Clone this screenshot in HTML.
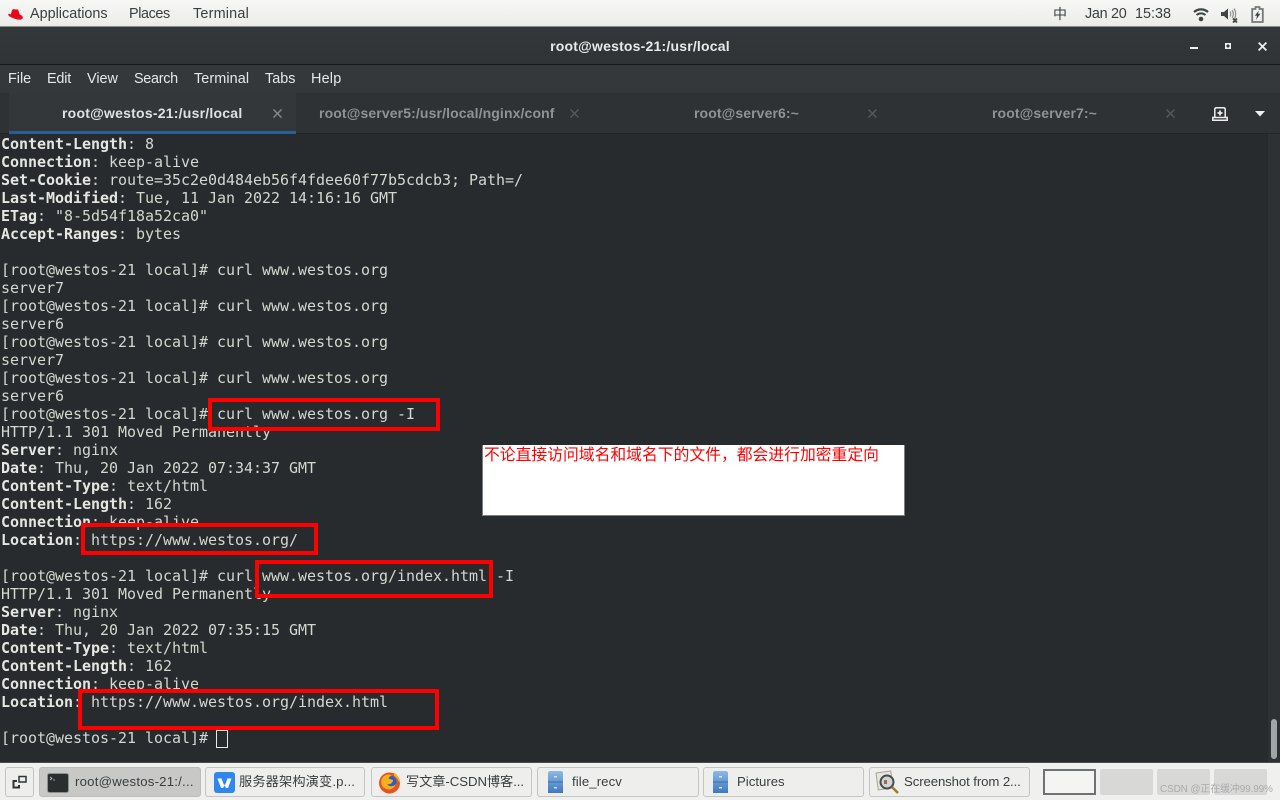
<!DOCTYPE html>
<html><head><meta charset="utf-8"><style>
html,body{margin:0;padding:0;background:#282b2e}
#r{position:relative;width:1280px;height:800px;overflow:hidden;background:#282b2e;font-family:"Liberation Sans","Noto Sans CJK SC",sans-serif}
.a{position:absolute;white-space:nowrap}
.u{font-size:14.4px;line-height:18px}
.m{color:#e6e8e8}
.tab{color:#8f9394;font-size:14px;line-height:18px;font-weight:400}
.l{position:absolute;left:1px;height:18px;font:15px/18px "DejaVu Sans Mono",monospace;color:#d3d7cf;white-space:pre;letter-spacing:-.03px}
.l b{font-weight:700;color:#e4e6e2}
.box{position:absolute;border:4px solid #f00;box-sizing:border-box}
.b{position:absolute;top:767px;height:30px;box-sizing:border-box;border:1px solid #c4c4c2;border-radius:3px;background:#eeeeec}
.t{position:absolute;top:773px;font-size:13.2px;line-height:18px;color:#3a3f40;white-space:nowrap}
.ws{position:absolute;top:769px;width:37px;height:26px;background:#d8d8d6;border-radius:2px}
svg{position:absolute;display:block}
</style></head><body><div id="r">
<div class="a" style="left:0;top:0;width:1280px;height:27px;background:linear-gradient(#f7f7f6,#ececea);border-bottom:1px solid #8a8c8c;box-sizing:border-box"></div>
<svg style="left:8px;top:8px" width="15" height="13" viewBox="0 0 15 13"><path d="M2.800 6.500 4 2.400C4.400 1 5.700.8 7 1.400 8.300 1.900 9.500.8 10.300 2L11.700 6.500C13.200 7.200 14.800 8 14.800 9.500 14.800 11.800 11.500 12 8.500 11.200 5 10.300.2 8.500.2 6.500.6 5.400 2 5.900 2.800 6.500Z" fill="#e6091c"/></svg>
<div class="a u" style="left:30px;top:5px;color:#3a3f40">Applications</div>
<div class="a u" style="left:129px;top:5px;color:#3a3f40;letter-spacing:-.4px">Places</div>
<div class="a u" style="left:193px;top:5px;color:#3a3f40;letter-spacing:.2px">Terminal</div>
<div class="a" style="left:1053px;top:5px;font-size:14px;line-height:18px;color:#3a3f40">中</div>
<div class="a u" style="left:1085px;top:5px;color:#3a3f40;letter-spacing:-.3px">Jan 20</div>
<div class="a u" style="left:1135px;top:5px;color:#3a3f40">15:38</div>
<svg style="left:1193px;top:7px" width="16" height="15" viewBox="0 0 16 15"><path d="M1 5C5 1.500 11 1.500 15 5" fill="none" stroke="#3f4445" stroke-width="2.200"/><path d="M3.500 8C6 5.800 10 5.800 12.500 8" fill="none" stroke="#3f4445" stroke-width="2"/><circle cx="8" cy="12" r="2.300" fill="#3f4445"/></svg>
<svg style="left:1220px;top:7px" width="18" height="16" viewBox="0 0 18 16"><path d="M1 5H4L8 1.500V12.500L4 9H1Z" fill="#3f4445"/><path d="M10 4.500C11 6 11 8 10 9.500M12 3C13.700 5.500 13.700 8.500 12 11M14 1.500C16.200 5 16.200 9 14 12.500" fill="none" stroke="#8d9090" stroke-width="1.200"/><path d="M13 11.500 17 15.500M17 11.500 13 15.500" stroke="#3f4445" stroke-width="1.800"/></svg>
<svg style="left:1251px;top:6px" width="13" height="17" viewBox="0 0 13 17"><path d="M4.500 1H8.500V3H11.800V16H1.200V3H4.500Z" fill="none" stroke="#74787a" stroke-width="1.800"/><path d="M7.800 4.500 3.800 9.800H6L5 13.800 9.400 7.800H7Z" fill="#3f4445"/></svg>

<div class="a" style="left:0;top:27px;width:1280px;height:38px;background:linear-gradient(#34383b,#2f3336);border-bottom:1px solid #151719;box-sizing:border-box"></div>
<div class="a" style="left:0;top:37px;width:1280px;text-align:center;font-size:14px;font-weight:700;line-height:18px;color:#e8e9e9;letter-spacing:.2px">root@westos-21:/usr/local</div>
<div class="a" style="left:1190px;top:47px;width:8px;height:2px;background:#eee"></div>
<div class="a" style="left:1225px;top:43px;width:6px;height:6px;background:radial-gradient(circle,#33373a 0,#33373a 35%,#eee 36%)"></div>
<svg style="left:1258px;top:42px" width="9" height="9" viewBox="0 0 9 9"><path d="M.6.600 8.400 8.400M8.400.600 .6 8.400" stroke="#eee" stroke-width="1.800"/></svg>

<div class="a" style="left:0;top:65px;width:1280px;height:28px;background:#34383b"></div>
<div class="a u m" style="left:8px;top:70px">File</div>
<div class="a u m" style="left:47px;top:70px;letter-spacing:-.2px">Edit</div>
<div class="a u m" style="left:87px;top:70px">View</div>
<div class="a u m" style="left:134px;top:70px;letter-spacing:-.3px">Search</div>
<div class="a u m" style="left:194px;top:70px;letter-spacing:.1px">Terminal</div>
<div class="a u m" style="left:265px;top:70px">Tabs</div>
<div class="a u m" style="left:311px;top:70px;letter-spacing:.2px">Help</div>

<div class="a" style="left:0;top:93px;width:1280px;height:41px;background:#2e3234;border-bottom:1px solid #232527;box-sizing:border-box"></div>
<div class="a" style="left:9px;top:93px;width:287px;height:41px;background:#33373a"></div>
<div class="a" style="left:9px;top:131px;width:287px;height:3px;background:#2a5d93"></div>
<div class="a" style="left:62px;top:104px;font-size:14px;font-weight:700;line-height:18px;color:#dfe1e1;letter-spacing:.23px">root@westos-21:/usr/local</div>
<svg style="left:273px;top:109px" width="9" height="9" viewBox="0 0 9 9"><path d="M.5.500 8.500 8.500M8.500.500 .5 8.500" stroke="#85888a" stroke-width="1.500"/></svg>
<div class="a tab" style="left:319px;top:104px;font-weight:700;letter-spacing:.12px">root@server5:/usr/local/nginx/conf</div>
<svg style="left:570px;top:109px" width="9" height="9" viewBox="0 0 9 9"><path d="M.5.500 8.500 8.500M8.500.500 .5 8.500" stroke="#55595a" stroke-width="1.500"/></svg>
<div class="a tab" style="left:694px;top:104px;font-weight:700;letter-spacing:.1px">root@server6:~</div>
<svg style="left:868px;top:109px" width="9" height="9" viewBox="0 0 9 9"><path d="M.5.500 8.500 8.500M8.500.500 .5 8.500" stroke="#55595a" stroke-width="1.500"/></svg>
<div class="a tab" style="left:992px;top:104px;font-weight:700;letter-spacing:.1px">root@server7:~</div>
<svg style="left:1166px;top:109px" width="9" height="9" viewBox="0 0 9 9"><path d="M.5.500 8.500 8.500M8.500.500 .5 8.500" stroke="#55595a" stroke-width="1.500"/></svg>
<svg style="left:1212px;top:107px" width="16" height="14" viewBox="0 0 16 14"><path d="M2.800 10.500V2.500C2.800 1.400 3.400.8 4.500.8H11.500C12.600.8 13.200 1.400 13.200 2.500V10.500" fill="none" stroke="#eee" stroke-width="1.500"/><path d="M.8 13.200V10.500H15.200V13.200Z" fill="none" stroke="#eee" stroke-width="1.500"/><path d="M8 3.500V8.500M5.500 6H10.500" stroke="#eee" stroke-width="1.800"/></svg>
<svg style="left:1255px;top:111px" width="10" height="6" viewBox="0 0 10 6"><path d="M0 0H10L5 5.500Z" fill="#eee"/></svg>

<div class="l" style="top:135px"><b>Content-Length</b>: 8</div>
<div class="l" style="top:153px"><b>Connection</b>: keep-alive</div>
<div class="l" style="top:171px"><b>Set-Cookie</b>: route=35c2e0d484eb56f4fdee60f77b5cdcb3; Path=/</div>
<div class="l" style="top:189px"><b>Last-Modified</b>: Tue, 11 Jan 2022 14:16:16 GMT</div>
<div class="l" style="top:207px"><b>ETag</b>: "8-5d54f18a52ca0"</div>
<div class="l" style="top:225px"><b>Accept-Ranges</b>: bytes</div>
<div class="l" style="top:261px">[root@westos-21 local]# curl www.westos.org</div>
<div class="l" style="top:279px">server7</div>
<div class="l" style="top:297px">[root@westos-21 local]# curl www.westos.org</div>
<div class="l" style="top:315px">server6</div>
<div class="l" style="top:333px">[root@westos-21 local]# curl www.westos.org</div>
<div class="l" style="top:351px">server7</div>
<div class="l" style="top:369px">[root@westos-21 local]# curl www.westos.org</div>
<div class="l" style="top:387px">server6</div>
<div class="l" style="top:405px">[root@westos-21 local]# curl www.westos.org -I</div>
<div class="l" style="top:423px">HTTP/1.1 301 Moved Permanently</div>
<div class="l" style="top:441px"><b>Server</b>: nginx</div>
<div class="l" style="top:459px"><b>Date</b>: Thu, 20 Jan 2022 07:34:37 GMT</div>
<div class="l" style="top:477px"><b>Content-Type</b>: text/html</div>
<div class="l" style="top:495px"><b>Content-Length</b>: 162</div>
<div class="l" style="top:513px"><b>Connection</b>: keep-alive</div>
<div class="l" style="top:531px"><b>Location</b>: https://www.westos.org/</div>
<div class="l" style="top:567px">[root@westos-21 local]# curl www.westos.org/index.html -I</div>
<div class="l" style="top:585px">HTTP/1.1 301 Moved Permanently</div>
<div class="l" style="top:603px"><b>Server</b>: nginx</div>
<div class="l" style="top:621px"><b>Date</b>: Thu, 20 Jan 2022 07:35:15 GMT</div>
<div class="l" style="top:639px"><b>Content-Type</b>: text/html</div>
<div class="l" style="top:657px"><b>Content-Length</b>: 162</div>
<div class="l" style="top:675px"><b>Connection</b>: keep-alive</div>
<div class="l" style="top:693px"><b>Location</b>: https://www.westos.org/index.html</div>
<div class="l" style="top:729px">[root@westos-21 local]#</div>
<div class="a" style="left:216px;top:730px;width:12px;height:18px;border:1px solid #e8e8e8;box-sizing:border-box"></div>

<div class="box" style="left:208px;top:398px;width:232px;height:33px"></div>
<div class="box" style="left:81px;top:523px;width:237px;height:32px"></div>
<div class="box" style="left:255px;top:560px;width:238px;height:38px"></div>
<div class="box" style="left:78px;top:689px;width:361px;height:41px"></div>

<div class="a" style="left:482px;top:445px;width:423px;height:71px;background:#fff;border:1px solid #7c7e80;border-width:0 1px 1px 1px;box-sizing:border-box"></div>
<div class="a" style="left:484px;top:445px;font-size:15.8px;line-height:18px;color:#f00;font-family:'WenQuanYi Zen Hei','Noto Sans CJK SC',sans-serif">不论直接访问域名和域名下的文件，都会进行加密重定向</div>

<div class="a" style="left:1268px;top:134px;width:12px;height:628px;background:#2d3133"></div>
<div class="a" style="left:1271px;top:719px;width:6px;height:40px;border-radius:3px;background:#a2a5a5"></div>

<div class="a" style="left:0;top:762px;width:1280px;height:38px;background:#f0f0ee;border-top:1px solid #4a4c4d;box-sizing:border-box"></div>
<div class="b" style="left:5px;width:29px"></div>
<svg style="left:12px;top:774px" width="16" height="16" viewBox="0 0 16 16"><rect x="7" y="2.500" width="7" height="5.500" fill="none" stroke="#2e3436" stroke-width="1.500"/><path d="M5 7H1.500V13.500H7V11" fill="none" stroke="#2e3436" stroke-width="2"/></svg>
<div class="b" style="left:39px;width:162px;background:#c8c8c6;border-color:#bcbcba"></div>
<svg style="left:47px;top:773px" width="22" height="20" viewBox="0 0 22 20"><rect x=".5" y=".5" width="21" height="19" rx="2" fill="#2a2e2e" stroke="#8d908c"/><path d="M3 4 5 5.500 3 7M6 7H8" stroke="#ccc" fill="none" stroke-width=".8"/></svg>
<div class="t" style="left:75px;letter-spacing:.22px">root@westos-21:/...</div>
<div class="b" style="left:205px;width:160px"></div>
<svg style="left:214px;top:772px" width="21" height="21" viewBox="0 0 21 21"><rect width="21" height="21" rx="3" fill="#2f87ee"/><path d="M3.500 6.500H7.500L10.500 14.500 13.500 6.500H17.500L14 16H11.800L10.500 12 9.200 16H7Z" fill="#fff"/></svg>
<div class="t" style="left:239px;letter-spacing:.15px">服务器架构演变.p...</div>
<div class="b" style="left:371px;width:161px"></div>
<svg style="left:378px;top:771px" width="23" height="23" viewBox="0 0 23 23"><circle cx="11.500" cy="12" r="10.500" fill="#e8531d"/><circle cx="12" cy="11" r="6.500" fill="#2a5fc7"/><path d="M16 1.500C20 4 22 8 21.500 12 20 8 18 6 16 5ZM6 5C9 3 12 3 14 5 12 5 11 6 10.500 7.500L15 9C15 12 12 14 9 13 11 16 15 16 18 13 16 19 9 20 5 16 2 12 3 8 6 5Z" fill="#f9b01f"/></svg>
<div class="t" style="left:406px;letter-spacing:-.05px">写文章-CSDN博客...</div>
<div class="b" style="left:537px;width:162px"></div>
<svg style="left:547px;top:770px" width="17" height="24" viewBox="0 0 17 24"><defs><linearGradient id="g" x1="0" y1="0" x2="0" y2="1"><stop offset="0" stop-color="#8db8e4"/><stop offset="1" stop-color="#3f79bf"/></linearGradient></defs><path d="M1 3C1 2 2 1 3 1H14C15 1 16 2 16 3V23H1Z" fill="url(#g)"/><path d="M1 12H16" stroke="#3a6fae"/><rect x="7" y="6" width="3" height="1.500" fill="#d7e3f2"/><rect x="7" y="17" width="3" height="1.500" fill="#d7e3f2"/></svg>
<div class="t" style="left:572px;letter-spacing:.1px">file_recv</div>
<div class="b" style="left:703px;width:161px"></div>
<svg style="left:712px;top:770px" width="17" height="24" viewBox="0 0 17 24"><path d="M1 3C1 2 2 1 3 1H14C15 1 16 2 16 3V23H1Z" fill="url(#g)"/><path d="M1 12H16" stroke="#3a6fae"/><rect x="7" y="6" width="3" height="1.500" fill="#d7e3f2"/><rect x="7" y="17" width="3" height="1.500" fill="#d7e3f2"/></svg>
<div class="t" style="left:737px">Pictures</div>
<div class="b" style="left:869px;width:161px"></div>
<svg style="left:875px;top:770px" width="25" height="25" viewBox="0 0 25 25"><rect x="2" y="2" width="15" height="17" fill="#e6e6dc" stroke="#a5a59a" transform="rotate(-8 9 10)"/><circle cx="12" cy="12" r="6.500" fill="#cdd5d8" stroke="#45494a" stroke-width="2"/><path d="M9 10H12V14H9Z" fill="#a56a3a"/><path d="M17 17 23 23" stroke="#a5762e" stroke-width="2.500"/></svg>
<div class="t" style="left:904px;letter-spacing:-.1px">Screenshot from 2...</div>
<div class="a" style="left:1043px;top:769px;width:53px;height:26px;background:#f4f4f2;border:2px solid #6f7273;box-sizing:border-box"></div>
<div class="ws" style="left:1100px;width:53px"></div>
<div class="ws" style="left:1157px;width:53px"></div>
<div class="ws" style="left:1214px;width:53px"></div>
<div class="a" style="left:1160px;top:784px;font-size:10px;line-height:12px;color:#a9acac;letter-spacing:-.15px">CSDN @正在缓冲99.99%</div>
</div></body></html>
